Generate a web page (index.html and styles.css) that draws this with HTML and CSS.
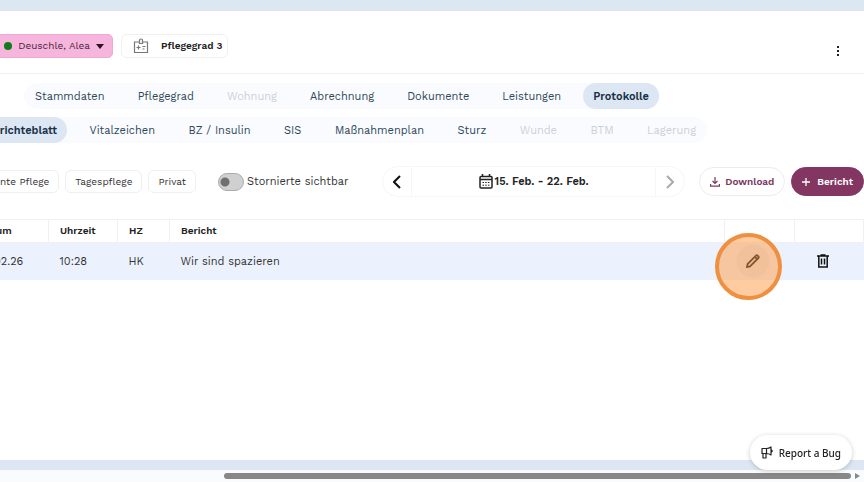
FILE: index.html
```html
<!DOCTYPE html>
<html lang="de">
<head>
    <meta charset="UTF-8">
    <title>Protokolle - Berichteblatt</title>
    <link rel="stylesheet" href="styles.css">
</head>
<body>
    <main class="content">
        <header class="patient-bar">
            <button class="patient"><span class="status"></span>Deuschle, Alea
                <svg width="8" height="5" viewBox="0 0 8 5"><path d="M0 0h8L4 5z" fill="#2b1224"/></svg>
            </button>
            <button class="care-level">
                <svg width="16" height="16" viewBox="0 0 16 16" fill="none" stroke="#777" stroke-width="1.2">
                    <path d="M6 4H1.5v10.5h13V4H10"/>
                    <path d="M6.5 5.5v-3a1.5 1.5 0 0 1 3 0v3z"/>
                    <path d="M3.5 9.5h4M5.5 7.5v4M9.5 8.5h3M9.5 11h2"/>
                </svg>
                Pflegegrad 3
            </button>
            <button class="more" aria-label="Mehr">
                <svg width="4" height="10" viewBox="0 0 4 10" fill="#222"><path d="M1 0h2v2H1zM1 4h2v2H1zM1 8h2v2H1z"/></svg>
            </button>
        </header>

        <nav class="tabs main-tabs">
            <button>Stammdaten</button>
            <button>Pflegegrad</button>
            <button disabled>Wohnung</button>
            <button>Abrechnung</button>
            <button>Dokumente</button>
            <button>Leistungen</button>
            <button class="active">Protokolle</button>
        </nav>
        <nav class="tabs sub-tabs">
            <button class="active">Berichteblatt</button>
            <button>Vitalzeichen</button>
            <button>BZ / Insulin</button>
            <button>SIS</button>
            <button>Maßnahmenplan</button>
            <button>Sturz</button>
            <button disabled>Wunde</button>
            <button disabled>BTM</button>
            <button disabled>Lagerung</button>
        </nav>

        <div class="toolbar">
            <div class="filters">
                <button>Geplante Pflege</button>
                <button>Tagespflege</button>
                <button>Privat</button>
            </div>
            <label class="switch"><input type="checkbox">Stornierte sichtbar</label>
            <div class="period">
                <button class="arrow" aria-label="Zurück">
                    <svg width="8" height="14" viewBox="0 0 8 14" fill="none" stroke="#111" stroke-width="2"><path d="M7 1L1 7l6 6"/></svg>
                </button>
                <button class="range">
                    <svg width="14" height="15" viewBox="0 0 14 15" fill="none" stroke="#222">
                        <rect x="1" y="2.5" width="12" height="11.5" rx="1" stroke-width="1.5"/>
                        <path d="M1 5.5h12M3.5 0v3M10.5 0v3" stroke-width="1.5"/>
                        <path d="M3.5 8.5h7M3.5 11.2h7" stroke-dasharray="1.5 1.2"/>
                    </svg>
                    15. Feb. - 22. Feb.
                </button>
                <button class="arrow" aria-label="Weiter" disabled>
                    <svg width="8" height="14" viewBox="0 0 8 14" fill="none" stroke="#aaa" stroke-width="2"><path d="M1 1l6 6-6 6"/></svg>
                </button>
            </div>
            <button class="action">
                <svg width="10" height="10" viewBox="0 0 10 10" fill="none" stroke="#7a3a5f" stroke-width="1.2"><path d="M5 0v6M2.5 4L5 6.5 7.5 4M.6 7v2.2h8.8V7"/></svg>
                Download
            </button>
            <button class="action primary">
                <svg width="8" height="8" viewBox="0 0 8 8" fill="none" stroke="#fff" stroke-width="1.3"><path d="M4 0v8M0 4h8"/></svg>
                Bericht
            </button>
        </div>

        <table class="reports">
            <colgroup>
                <col class="col-date"><col class="col-time"><col class="col-sign"><col><col class="col-edit"><col class="col-delete">
            </colgroup>
            <thead>
                <tr><th>Datum</th><th>Uhrzeit</th><th>HZ</th><th>Bericht</th><th></th><th></th></tr>
            </thead>
            <tbody>
                <tr>
                    <td>22.02.26</td>
                    <td>10:28</td>
                    <td>HK</td>
                    <td>Wir sind spazieren</td>
                    <td class="icon-cell">
                        <button class="edit" aria-label="Bearbeiten">
                            <svg width="14" height="14" viewBox="0 0 14 14" fill="none" stroke="#111" stroke-width="1.8"><path d="M1 13l.6-3L10 1.6q.8-.8 1.6 0l.8.8q.8.8 0 1.6L4 12.4zM9 2.8L11.2 5"/></svg>
                            <span class="highlight"></span>
                        </button>
                    </td>
                    <td class="icon-cell">
                        <button aria-label="Löschen">
                            <svg width="12" height="14" viewBox="0 0 12 14" fill="none" stroke="#111" stroke-width="1.5"><path d="M0 2h12M3.5 1h5M1.8 2v11h8.4V2M4.5 4.5v6M7.5 4.5v6"/></svg>
                        </button>
                    </td>
                </tr>
            </tbody>
        </table>
    </main>

    <footer class="page-end">
        <div class="scrollbar">
            <div class="thumb"></div>
            <svg width="5" height="6" viewBox="0 0 5 6"><path d="M0 0l5 3-5 3z" fill="#888"/></svg>
        </div>
    </footer>

    <button class="bug">
        <svg width="13" height="13" viewBox="0 0 13 13" fill="none" stroke="#222" stroke-width="1.2" stroke-linejoin="round">
            <path d="M1 2.5h4.5q2.5 0 4.5-1.5v8Q8 7.5 5.5 7.5H1zM2 7.5V12h3V7.5M5.5 2.5v5M10 3.5q2.5 1.5 0 3"/>
        </svg>
        Report a Bug
    </button>
</body>
</html>
```

FILE: styles.css
```css
* {
    box-sizing: border-box;
}

body {
    margin: 0;
    min-height: 100vh;
    display: flex;
    flex-direction: column;
    overflow: hidden;
    border-top: 11px solid #dde6f3;
    background: #fff;
    color: #333;
    font-family: "Work Sans", Inter, sans-serif;
    font-size: 11px;
    line-height: 16px;
}

button {
    display: flex;
    align-items: center;
    justify-content: center;
    flex: none;
    padding: 0;
    border: none;
    background: none;
    color: inherit;
    font: inherit;
    white-space: nowrap;
}

svg {
    flex: none;
}

/* the page is scrolled to the right, its left edge is out of view */
.content {
    flex: 1;
    margin-left: -80px;
}

.patient-bar {
    display: flex;
    align-items: center;
    height: 63px;
    padding: 8px 24px 0 64px;
    border-bottom: 1px solid #f0f0f3;
    font-size: 10px;
}

.patient {
    width: 129px;
    height: 24px;
    gap: 6px;
    padding-right: 8px;
    justify-content: flex-end;
    border: 1px solid #f1a8d2;
    border-radius: 5px;
    background: #f5b5dc;
    color: #4b2540;
}

.status {
    width: 8px;
    height: 8px;
    border-radius: 50%;
    background: #137a1c;
}

.care-level {
    height: 24px;
    gap: 12px;
    margin-left: 8px;
    padding: 0 5px 0 11px;
    border: 1px solid #f0f0f2;
    border-radius: 6px;
    color: #222;
    font-weight: 600;
}

.more {
    margin: 10px 0 0 auto;
}

.tabs {
    display: flex;
    justify-content: space-between;
    height: 26px;
    border-radius: 13px;
    background: #fafbff;
    color: #2d4857;
}

.tabs button {
    padding: 1px 11px 0;
    border-radius: 13px;
}

.tabs button:disabled {
    color: #ccd1d6;
}

.tabs .active {
    padding: 1px 10px 0;
    background: #dde6f3;
    color: #173247;
    font-weight: 600;
}

.main-tabs {
    width: 635px;
    margin: 9px 0 0 104px;
}

.sub-tabs {
    width: 731px;
    margin: 8px 0 0 56px;
}

.toolbar {
    display: flex;
    align-items: center;
    margin-top: 23px;
}

.filters {
    display: flex;
    justify-content: flex-end;
    gap: 6px;
    width: 276px;
}

.filters button {
    height: 23px;
    padding: 0 9px;
    border: 1px solid #efeff2;
    border-radius: 6px;
    font-size: 10px;
}

.switch {
    display: flex;
    align-items: center;
    gap: 3px;
    width: 164px;
    margin-left: 22px;
    white-space: nowrap;
}

.switch input {
    appearance: none;
    width: 26px;
    height: 18px;
    margin: 0;
    border: 1px solid #aaa;
    border-radius: 9px;
    background: radial-gradient(circle at 6px 50%, #707070 4px, #d0d0d0 5px);
}

.period {
    display: flex;
    flex: 1;
    height: 31px;
    border: 1px solid #f6f6f8;
    border-radius: 16px;
}

.arrow {
    width: 28px;
}

.range {
    flex: 1;
    gap: 2px;
    border: solid #f6f6f8;
    border-width: 0 1px;
    color: #222;
    font-weight: 600;
}

.action {
    height: 29px;
    gap: 5px;
    margin-left: 14px;
    padding: 0 10px;
    border: 1px solid #f2e9ef;
    border-radius: 15px;
    color: #7a3a5f;
    font-size: 10px;
    font-weight: 600;
}

.action.primary {
    gap: 7px;
    margin-left: 6px;
    border-color: #843662;
    background: #843662;
    color: #fff;
}

.reports {
    width: 100%;
    margin-top: 22px;
    border-collapse: collapse;
    table-layout: fixed;
}

.col-date {
    width: 128px;
}

.col-time {
    width: 69px;
}

.col-sign {
    width: 52px;
}

.col-edit {
    width: 70px;
}

.col-delete {
    width: 69px;
}

.reports th {
    height: 23px;
    padding: 0 11px;
    border: 1px solid #f0f0f3;
    color: #222;
    font-size: 10px;
    font-weight: 600;
    text-align: left;
}

.reports td {
    height: 37px;
    padding: 1px 11px 0;
    background: #ecf2fd;
}

.reports th:first-child,
.reports td:first-child {
    padding-left: 58px;
}

.reports .icon-cell {
    padding: 0;
}

.icon-cell button {
    position: relative;
    width: 56px;
    height: 36px;
}

.icon-cell .edit {
    background: radial-gradient(circle, rgba(0, 0, 0, 0.04) 16px, transparent 17px);
}

/* click marker over the edit button */
.highlight {
    position: absolute;
    top: -10px;
    left: -10px;
    width: 67px;
    height: 67px;
    border: 4px solid #ee9040;
    border-radius: 50%;
    background: rgba(255, 153, 68, 0.5);
}

.page-end {
    height: 22px;
    border-top: 10px solid #dde6f3;
    background: #fafbfd;
}

.scrollbar {
    display: flex;
    align-items: center;
    gap: 4px;
    height: 12px;
    padding-right: 4px;
}

.thumb {
    flex: 1;
    height: 6px;
    margin-left: 26%;
    border-radius: 3px;
    background: #888;
}

.bug {
    position: fixed;
    right: 12px;
    bottom: 12px;
    height: 35px;
    gap: 5px;
    padding: 0 11px;
    border-radius: 18px;
    background: #fff;
    box-shadow: 0 1px 5px rgba(0, 0, 0, 0.2);
    color: #222;
    font-family: "Noto Sans", sans-serif;
    font-size: 10px;
    font-weight: 500;
}
```
